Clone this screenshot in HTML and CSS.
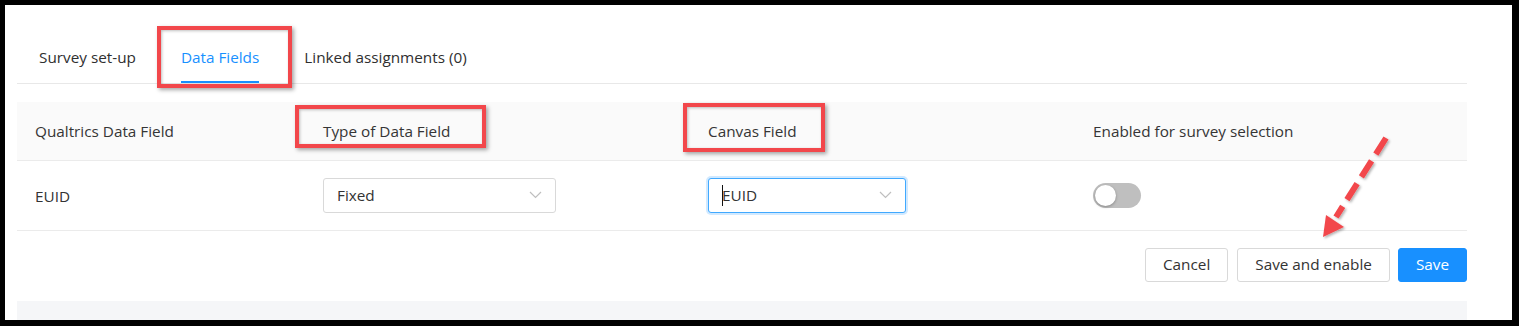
FILE: index.html
```html
<!DOCTYPE html>
<html lang="en">
<head>
<meta charset="utf-8">
<title>Data Fields</title>
<link rel="stylesheet" href="styles.css">
</head>
<body>
<div class="frame">
  <nav class="tabs">
    <div class="tab">Survey set-up</div>
    <div class="tab active">Data Fields</div>
    <div class="tab">Linked assignments (0)</div>
  </nav>

  <div class="table">
    <div class="thead">
      <div class="cell">Qualtrics Data Field</div>
      <div class="cell">Type of Data Field</div>
      <div class="cell">Canvas Field</div>
      <div class="cell">Enabled for survey selection</div>
    </div>
    <div class="trow">
      <div class="cell">EUID</div>
      <div class="cell">
        <div class="select w1">
          <span class="value">Fixed</span>
          <svg class="chev" width="13" height="8" viewBox="0 0 13 8"><polyline points="1,1 6.5,6.5 12,1" fill="none" stroke="#bfbfbf" stroke-width="1.2"/></svg>
        </div>
      </div>
      <div class="cell">
        <div class="select w2 focused">
          <span class="value"><span class="caret"></span>EUID</span>
          <svg class="chev" width="13" height="8" viewBox="0 0 13 8"><polyline points="1,1 6.5,6.5 12,1" fill="none" stroke="#bfbfbf" stroke-width="1.2"/></svg>
        </div>
      </div>
      <div class="cell">
        <div class="switch"><span class="knob"></span></div>
      </div>
    </div>
  </div>

  <div class="actions">
    <button class="btn">Cancel</button>
    <button class="btn">Save and enable</button>
    <button class="btn primary">Save</button>
  </div>

  <div class="footer-band"></div>

  <div class="mark mark-tab"></div>
  <div class="mark mark-type"></div>
  <div class="mark mark-canvas"></div>

  <svg class="arrow" width="1507" height="315" viewBox="0 0 1507 315">
    <defs>
      <filter id="sh" x="-20%" y="-20%" width="140%" height="140%">
        <feDropShadow dx="1.5" dy="1.5" stdDeviation="1.2" flood-color="#000" flood-opacity="0.3"/>
      </filter>
    </defs>
    <g filter="url(#sh)">
      <line x1="1381" y1="133" x2="1331" y2="212" stroke="#f2474b" stroke-width="6" stroke-dasharray="19 8"/>
      <polygon points="1318,232 1321,210 1339,222" fill="#f2474b"/>
    </g>
  </svg>
</div>
</body>
</html>
```

FILE: styles.css
```css
* { box-sizing: border-box; }

html, body {
  margin: 0;
  padding: 0;
  background: #000;
}

body {
  font-family: "Open Sans", "Liberation Sans", sans-serif;
  font-size: 15.3px;
  color: #333;
}

.frame {
  position: relative;
  margin: 5px 7px 6px 5px;
  height: 315px;
  background: #fff;
  padding: 0 45px 0 12px;
  display: flex;
  flex-direction: column;
}

.tabs {
  display: flex;
  align-items: flex-end;
  gap: 45px;
  height: 79px;
  padding-left: 22px;
  border-bottom: 1px solid #e8e8e8;
}

.tab {
  line-height: 22px;
  padding-bottom: 13px;
  border-bottom: 2px solid transparent;
  color: #2f2f2f;
  white-space: nowrap;
}

.tab.active {
  color: #1890ff;
  border-bottom-color: #1890ff;
}

.table {
  margin-top: 18px;
}

.thead,
.trow {
  display: grid;
  grid-template-columns: 288px 385px 385px 1fr;
  align-items: center;
  border-bottom: 1px solid #ebebeb;
}

.thead {
  height: 59px;
  background: #fafafa;
  color: #353535;
}

.trow {
  height: 70px;
}

.cell {
  padding-left: 18px;
  white-space: nowrap;
}

.select {
  height: 35px;
  border: 1px solid #d9d9d9;
  border-radius: 3px;
  display: flex;
  align-items: center;
  justify-content: space-between;
  padding: 0 13px 0 13px;
  background: #fff;
  margin-top: -1px;
}

.select.w1 { width: 233px; }
.select.w2 { width: 198px; }

.select.focused {
  border-color: #40a9ff;
  box-shadow: 0 0 0 2px rgba(24, 144, 255, 0.2);
}

.value {
  display: flex;
  align-items: center;
  color: #333;
}

.caret {
  display: inline-block;
  width: 1px;
  height: 21px;
  background: #111;
  margin-right: -1px;
}

.chev { display: block; }

.switch {
  position: relative;
  width: 48px;
  height: 25px;
  border-radius: 13px;
  background: #bfbfbf;
  margin-top: -1px;
}

.knob {
  position: absolute;
  left: 2px;
  top: 2px;
  width: 21px;
  height: 21px;
  border-radius: 50%;
  background: #fff;
  box-shadow: 0 1px 3px rgba(0, 0, 0, 0.3);
}

.actions {
  display: flex;
  justify-content: flex-end;
  gap: 8px;
  margin-top: 17px;
}

.btn {
  font-family: inherit;
  font-size: 15.3px;
  height: 34px;
  padding: 0 17px;
  border: 1px solid #d9d9d9;
  border-radius: 3px;
  background: #fff;
  color: #333;
  line-height: 1;
}

.btn + .btn { margin-left: 1px; }

.btn.primary {
  background: #1890ff;
  border-color: #1890ff;
  color: #fff;
  margin-left: 0;
}

.footer-band {
  margin-top: 19px;
  flex: 1;
  background: #f5f6f8;
}

.mark {
  position: absolute;
  border: 4px solid #f2474b;
  box-shadow: 2px 2px 4px rgba(0, 0, 0, 0.35), inset 1px 1px 3px rgba(0, 0, 0, 0.25);
  pointer-events: none;
}

.mark-tab { left: 152px; top: 21px; width: 135px; height: 62px; }
.mark-type { left: 290px; top: 100px; width: 191px; height: 43px; }
.mark-canvas { left: 678px; top: 98px; width: 142px; height: 49px; }

.arrow {
  position: absolute;
  left: 0;
  top: 0;
  pointer-events: none;
}
```
